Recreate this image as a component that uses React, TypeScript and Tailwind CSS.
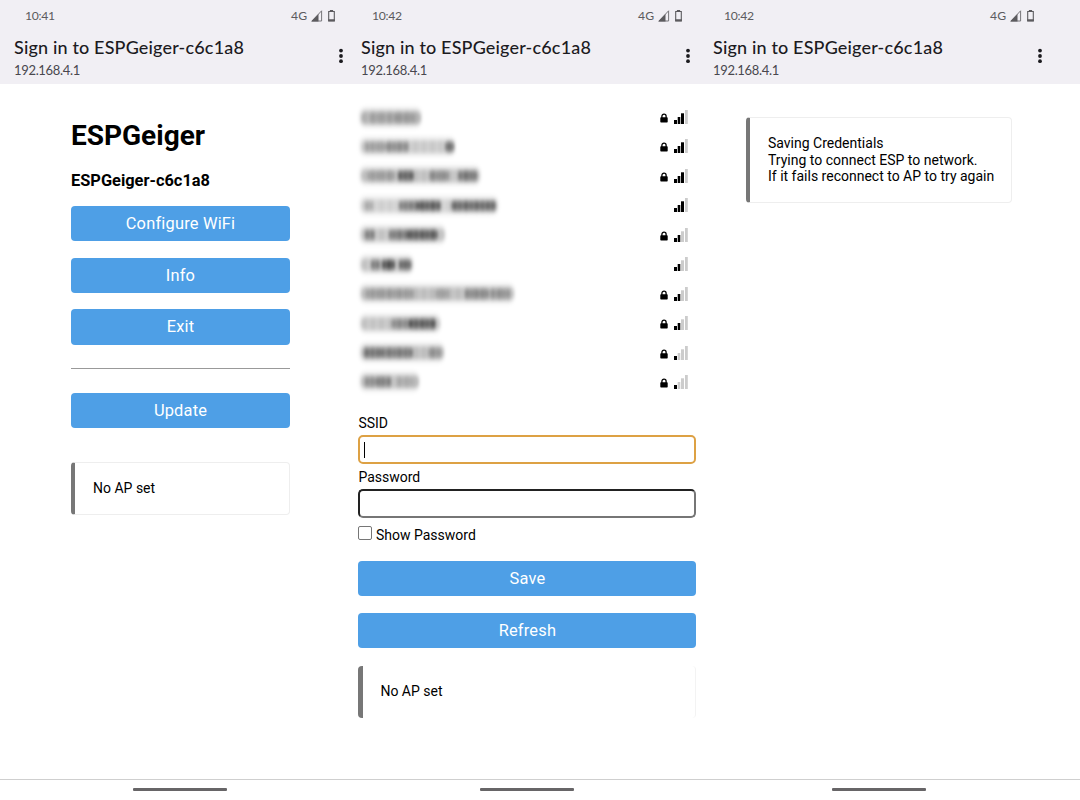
import type { ReactNode } from 'react';

type Smudge = [x: number, width: number, opacity: number];

interface Network {
  width: number;
  level: number;
  locked: boolean;
  shade: number;
  smudges: Smudge[];
}

const networks: Network[] = [
  { width: 60, level: 3, locked: true, shade: 0.24, smudges: [[8, 28, 0.1], [34, 20, 0.14]] },
  { width: 94, level: 3, locked: true, shade: 0.16, smudges: [[4, 20, 0.2], [24, 24, 0.28], [84, 9, 0.42]] },
  { width: 119, level: 3, locked: true, shade: 0.19, smudges: [[6, 28, 0.18], [37, 16, 0.45], [68, 20, 0.26], [97, 19, 0.36]] },
  { width: 137, level: 3, locked: false, shade: 0.14, smudges: [[4, 8, 0.18], [38, 20, 0.36], [56, 24, 0.5], [90, 45, 0.45]] },
  { width: 84, level: 2, locked: true, shade: 0.18, smudges: [[4, 10, 0.32], [28, 20, 0.35], [46, 31, 0.48]] },
  { width: 52, level: 2, locked: false, shade: 0.18, smudges: [[10, 9, 0.34], [21, 13, 0.55], [38, 12, 0.45]] },
  { width: 153, level: 2, locked: true, shade: 0.2, smudges: [[5, 48, 0.18], [74, 14, 0.16], [104, 24, 0.26], [129, 20, 0.22]] },
  { width: 79, level: 2, locked: true, shade: 0.18, smudges: [[30, 20, 0.28], [48, 27, 0.48]] },
  { width: 83, level: 1, locked: true, shade: 0.2, smudges: [[3, 18, 0.36], [20, 32, 0.33], [67, 13, 0.22]] },
  { width: 58, level: 1, locked: true, shade: 0.2, smudges: [[4, 10, 0.24], [14, 16, 0.3], [36, 17, 0.1]] },
];

function StatusIcons() {
  return (
    <svg width="26" height="14" viewBox="0 0 26 14" fill="none">
      <path d="M1 12 10.6 1.8V12Z" stroke="#77757a" strokeWidth="1" />
      <path d="M0 12.5 7.5 5V12.5Z" fill="#5c5b5e" />
      <path d="M17.7 2.5H23.3V11.8H17.7Z" stroke="#5c5b5e" strokeWidth="1.1" />
      <path d="M18.9 1H22.1V2.5H18.9ZM17.2 10.3H23.8V12.4H17.2Z" fill="#5c5b5e" />
    </svg>
  );
}

function Header({ time }: { time: string }) {
  return (
    <header className="h-[84px] w-full bg-[#f1eff4] font-['Lato',sans-serif]">
      <div className="flex h-[32px] items-center pl-[25px] text-[12.2px] text-[#5c5b5e]">
        <span className="w-[266px] tracking-[-0.3px]">{time}</span>
        <span className="w-[20px] tracking-[0.2px]">4G</span>
        <StatusIcons />
      </div>
      <div className="flex w-[347px] pl-[14px]">
        <div className="w-[321px]">
          <h2 className="h-[31px] text-[18px] leading-[31px] font-medium tracking-[0.16px] whitespace-nowrap text-[#1c1b1f]">
            Sign in to ESPGeiger-c6c1a8
          </h2>
          <p className="text-[13px] leading-[15px] tracking-[-0.33px] text-[#49474e]">192.168.4.1</p>
        </div>
        <svg className="mt-[16px]" width="12" height="16" viewBox="0 0 12 16" fill="#1c1b1f">
          <circle cx="6" cy="2.6" r="1.9" />
          <circle cx="6" cy="8" r="1.9" />
          <circle cx="6" cy="13.2" r="1.9" />
        </svg>
      </div>
    </header>
  );
}

function Phone({ time, size, handle, children }: { time: string; size: string; handle: string; children: ReactNode }) {
  return (
    <section className={`flex h-[800px] shrink-0 flex-col ${size}`}>
      <Header time={time} />
      <main className="h-[695px] w-full">{children}</main>
      <footer className="h-[21px] w-full border-t border-[#cfcfcf] pt-[8px]">
        <div className={`h-[3px] w-[94px] rounded-[1px] bg-[#676567] ${handle}`} />
      </footer>
    </section>
  );
}

function Button({ children }: { children: ReactNode }) {
  return (
    <button className="block h-[35.2px] w-full rounded-[4px] bg-[#4e9fe6] text-center text-[16.4px] leading-[35px] tracking-[0.2px] text-white">
      {children}
    </button>
  );
}

function SignalBars({ level }: { level: number }) {
  return (
    <svg width="14" height="14" viewBox="0 0 14 14">
      {[4, 7, 10.7, 14].map((h, i) => (
        <rect
          key={h}
          x={[0, 3.7, 7, 11][i]}
          y={14 - h}
          width={[3, 2.6, 3, 2.8][i]}
          height={h}
          fill={i < level ? '#000' : '#ccc'}
        />
      ))}
    </svg>
  );
}

function Lock() {
  return (
    <svg width="8" height="10" viewBox="0 0 8 10" fill="none">
      <path d="M1.9 5V3.2a2.1 2.1 0 0 1 4.2 0V5" stroke="#000" strokeWidth="1.3" />
      <rect x="0.3" y="4.3" width="7.4" height="5.1" rx="0.7" fill="#000" />
    </svg>
  );
}

function RedactedName({ network }: { network: Network }) {
  const { width, shade, smudges } = network;
  return (
    <svg width="180" height="29" viewBox="-4 0 180 29">
      <g filter="url(#soft)">
        <rect x="-1" y="4.5" width={width + 3} height="20" rx="7" fill="#000" opacity={shade * 0.4} />
        <rect x="1" y="8.5" width={width} height="12.5" rx="5" fill="url(#weave)" opacity={shade} />
      </g>
      <g filter="url(#softer)">
        {smudges.map(([x, w, o]) => (
          <rect key={x} x={x + 1} y="10" width={w} height="9.5" rx="3" fill="url(#grain)" opacity={o * 1.15} />
        ))}
      </g>
    </svg>
  );
}

function NetworkRow({ network }: { network: Network }) {
  return (
    <li className="flex h-[29.44px] items-center">
      <div className="-ml-[2px] w-[304px]">
        <RedactedName network={network} />
      </div>
      <div className="flex w-[14px] pt-[2px]">{network.locked && <Lock />}</div>
      <SignalBars level={network.level} />
    </li>
  );
}

export default function App() {
  return (
    <div className="flex h-[800px] w-[1080px] overflow-hidden bg-white font-['Roboto',sans-serif] text-black">
      <svg className="absolute" width="0" height="0">
        <defs>
          <filter id="soft" x="-10%" y="-50%" width="120%" height="200%">
            <feGaussianBlur stdDeviation="1.8 2.1" />
          </filter>
          <filter id="softer" x="-10%" y="-60%" width="120%" height="220%">
            <feGaussianBlur stdDeviation="1.7 2.4" />
          </filter>
          <pattern id="grain" width="11" height="12" patternUnits="userSpaceOnUse">
            <rect width="11" height="12" fill="#000" opacity="0.75" />
            <rect width="2.5" height="12" fill="#000" />
            <rect x="5" width="4" height="12" fill="#000" />
          </pattern>
          <pattern id="weave" width="17" height="29" patternUnits="userSpaceOnUse">
            <rect width="17" height="29" fill="#000" opacity="0.8" />
            <rect x="2" width="5" height="29" fill="#000" />
            <rect x="11" width="4" height="29" fill="#000" />
          </pattern>
        </defs>
      </svg>

      <Phone time="10:41" size="w-[347px]" handle="ml-[133px]">
        <div className="ml-[71px] w-[219px] pt-[33px]">
          <h1 className="h-[38px] text-[28px] leading-[38px] font-bold">ESPGeiger</h1>
          <h3 className="mt-[16px] h-[20px] text-[16.4px] leading-[20px] font-bold">ESPGeiger-c6c1a8</h3>
          <div className="mt-[15px] flex flex-col gap-[16.5px]">
            <Button>Configure WiFi</Button>
            <Button>Info</Button>
            <Button>Exit</Button>
          </div>
          <hr className="mt-[23.4px] mb-[24px] border-t border-[#999]" />
          <Button>Update</Button>
          <div className="mt-[33.8px] h-[53px] rounded-[4px] border border-l-[4px] border-[#eee] border-l-[#777] pl-[18px] text-[14px] leading-[51px]">
            No AP set
          </div>
        </div>
      </Phone>

      <Phone time="10:42" size="w-[352px]" handle="ml-[133px]">
        <div className="ml-[11.4px] w-[338px] pt-[18.3px] text-[14px]">
          <ul>
            {networks.map((network, i) => (
              <NetworkRow key={i} network={network} />
            ))}
          </ul>
          <label className="mt-[17.2px] block h-[18px] leading-[18px]">SSID</label>
          <div className="mt-[3.1px] h-[29px] rounded-[5px] border-2 border-[#dda144] pt-[5px] pl-[4px]">
            <div className="h-[16px] w-[1px] bg-black" />
          </div>
          <label className="mt-[3.8px] block h-[18px] leading-[18px]">Password</label>
          <div className="mt-[3.2px] h-[29px] rounded-[5px] border-2 border-[#767676] border-t-[#222] border-l-[#222]" />
          <div className="mt-[8.4px] flex h-[18px] items-center">
            <span className="mb-[4px] h-[14px] w-[14px] rounded-[2px] border border-[#767676]" />
            <span className="ml-[3.6px] leading-[18px]">Show Password</span>
          </div>
          <div className="mt-[16.6px] flex flex-col gap-[16.6px]">
            <Button>Save</Button>
            <Button>Refresh</Button>
          </div>
          <div className="mt-[18px] h-[52px] rounded-[4px] border-r border-l-[5px] border-r-[#f3f3f3] border-l-[#777] pl-[17px] leading-[51.5px]">
            No AP set
          </div>
        </div>
      </Phone>

      <Phone time="10:42" size="w-[381px]" handle="ml-[132.5px]">
        <div className="pt-[33px] pl-[47px]">
          <div className="h-[86px] w-[266px] rounded-[4px] border border-l-[4px] border-[#eee] border-l-[#777] pt-[17.2px] pl-[18px] text-[14px] leading-[16.4px] whitespace-nowrap">
            <p>Saving Credentials</p>
            <p>Trying to connect ESP to network.</p>
            <p>If it fails reconnect to AP to try again</p>
          </div>
        </div>
      </Phone>
    </div>
  );
}
